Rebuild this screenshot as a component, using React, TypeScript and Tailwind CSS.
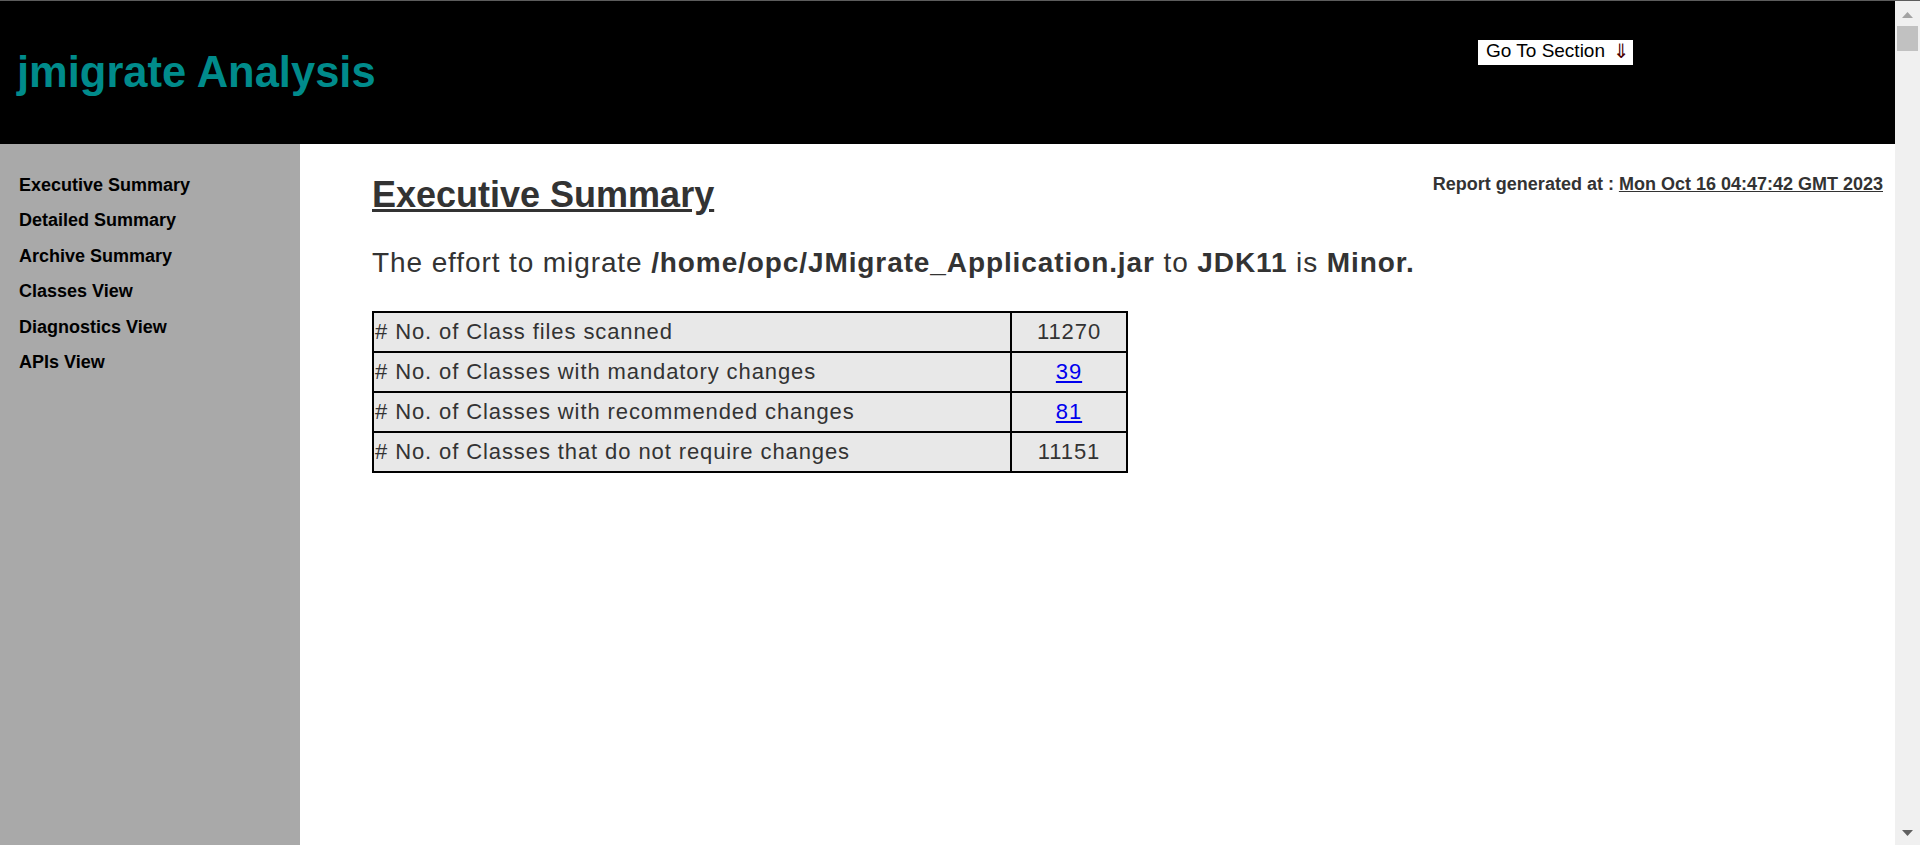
const navItems = [
  'Executive Summary',
  'Detailed Summary',
  'Archive Summary',
  'Classes View',
  'Diagnostics View',
  'APIs View',
];

const rows = [
  { label: '# No. of Class files scanned', value: '11270', link: false },
  { label: '# No. of Classes with mandatory changes', value: '39', link: true },
  { label: '# No. of Classes with recommended changes', value: '81', link: true },
  { label: '# No. of Classes that do not require changes', value: '11151', link: false },
];

function Scrollbar() {
  return (
    <div className="flex w-[25px] flex-col items-center bg-[#f0f0f0]">
      <svg className="mt-[11px]" width="11" height="6" viewBox="0 0 11 6">
        <path d="M5.5 0 L11 6 L0 6 Z" fill="#a3a3a3" />
      </svg>
      <div className="mt-[8px] ml-[2px] h-[25px] w-[21px] self-start bg-[#c1c1c1]" />
      <svg className="mt-auto mb-[9px]" width="11" height="6" viewBox="0 0 11 6">
        <path d="M0 0 L11 0 L5.5 6 Z" fill="#606060" />
      </svg>
    </div>
  );
}

export default function App() {
  return (
    <div className="flex h-[845px] flex-col overflow-hidden bg-white font-['Liberation_Sans',Arial,sans-serif] leading-[normal]">
      <div className="h-px bg-[#5c5c5c]" />
      <div className="flex min-h-0 flex-1">
        <div className="flex min-w-0 flex-1 flex-col">
          <header className="flex h-[143px] items-start bg-black">
            <h1 className="self-center pl-[17px] text-[43.5px] font-bold text-[#008b8b]">
              jmigrate Analysis
            </h1>
            <button className="mt-[39px] mr-[262px] ml-auto flex h-[25px] w-[155px] items-start bg-white pl-[8px] text-[19px] leading-[22px] text-black">
              Go To Section
              <span className="ml-[8px] font-['DejaVu_Sans',sans-serif] text-[20px] leading-[22px] text-[#4a0000]">
                ⇓
              </span>
            </button>
          </header>

          <div className="flex min-h-0 flex-1">
            <nav className="w-[300px] shrink-0 bg-[#a9a9a9] pt-[24px] pl-[19px]">
              {navItems.map((item) => (
                <a key={item} href="#" className="block text-[18px] leading-[35.4px] font-bold text-black">
                  {item}
                </a>
              ))}
            </nav>

            <main className="flex-1 pt-[30px] pr-[12px] pl-[72px] text-[#333]">
              <div className="flex items-start justify-between">
                <h2 className="text-[36px] font-bold underline">Executive Summary</h2>
                <p className="text-[18px] font-bold">
                  Report generated at : <span className="underline">Mon Oct 16 04:47:42 GMT 2023</span>
                </p>
              </div>

              <p className="mt-[31px] text-[28px] tracking-[0.9px]">
                The effort to migrate <b>/home/opc/JMigrate_Application.jar</b> to <b>JDK11</b> is{' '}
                <b>Minor.</b>
              </p>

              <div className="mt-[32px] w-[756px] border-2 border-black bg-[#e8e8e8] text-[22px] tracking-[0.9px]">
                {rows.map((row, i) => (
                  <div key={row.label} className={i === 0 ? 'flex h-[38px]' : 'flex h-[40px] border-t-2 border-black'}>
                    <div className="flex w-[638px] items-center border-r-2 border-black pl-px">{row.label}</div>
                    <div className="flex flex-1 items-center justify-center">
                      {row.link ? (
                        <a href="#" className="text-[#0000ee] underline">
                          {row.value}
                        </a>
                      ) : (
                        row.value
                      )}
                    </div>
                  </div>
                ))}
              </div>
            </main>
          </div>
        </div>
        <Scrollbar />
      </div>
    </div>
  );
}
